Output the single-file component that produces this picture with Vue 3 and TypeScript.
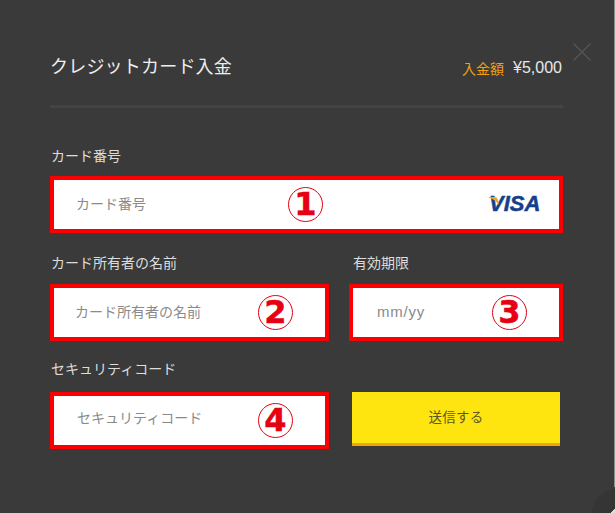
<script setup lang="ts">
const amount = '¥5,000'
</script>

<template>
  <div class="page">
    <button class="close" type="button" aria-label="閉じる">
      <svg width="18" height="18" viewBox="0 0 18 18"><path d="M0.5 0.5 L17.5 17.5 M17.5 0.5 L0.5 17.5" stroke="#565656" stroke-width="1.3" fill="none" /></svg>
    </button>
    <header class="head">
      <h1 class="title">クレジットカード入金</h1>
      <p class="sum"><span class="sum-label">入金額</span><span class="sum-value">{{ amount }}</span></p>
    </header>
    <form class="form" @submit.prevent>
      <div class="field wide">
        <label class="label">カード番号</label>
        <div class="box">
          <input class="input" placeholder="カード番号" />
          <span class="mark m1">1</span>
          <span class="visa">
            <span class="visa-text">VISA</span>
            <svg class="swoosh" width="12" height="9" viewBox="0 0 12 9"><path d="M0 0 H6.500 C8.500 0 9.500 1 10 3 L11 8 C8.500 4.500 5 1.500 0 0 Z" fill="#f0a81e" /></svg>
          </span>
        </div>
      </div>
      <div class="field">
        <label class="label mid">カード所有者の名前</label>
        <div class="box">
          <input class="input tight" placeholder="カード所有者の名前" />
          <span class="mark m2">2</span>
        </div>
      </div>
      <div class="field">
        <label class="label mid inset">有効期限</label>
        <div class="box">
          <input class="input latin" placeholder="mm/yy" />
          <span class="mark m3">3</span>
        </div>
      </div>
      <div class="field">
        <label class="label low">セキュリティコード</label>
        <div class="box">
          <input class="input raised" placeholder="セキュリティコード" />
          <span class="mark m2">4</span>
        </div>
      </div>
      <div class="field submit">
        <button class="send" type="submit">送信する</button>
      </div>
    </form>
    <span class="edge"></span>
    <span class="corner"></span>
    <span class="tip"></span>
  </div>
</template>

<style>
html, body { margin: 0; background: #3a3a3a; }
</style>

<style scoped>
.page {
  position: relative;
  box-sizing: border-box;
  width: 615px;
  height: 513px;
  padding: 0 52px 0 50px;
  overflow: hidden;
  background: #3a3a3a;
  font-family: "Noto Sans CJK JP", "Liberation Sans", sans-serif;
}
.close {
  position: absolute;
  left: 573px;
  top: 43px;
  padding: 0;
  border: 0;
  background: none;
  line-height: 0;
}
.head {
  display: flex;
  justify-content: space-between;
  align-items: flex-start;
  height: 105px;
  border-bottom: 3px solid #444;
}
.title {
  margin: 51px 0 0;
  font-size: 18px;
  font-weight: 400;
  letter-spacing: 0.2px;
  line-height: 28px;
  color: #eee;
}
.sum {
  display: flex;
  gap: 9px;
  align-items: center;
  margin: 58px 1px 0 0;
  height: 20px;
}
.sum-label { font-size: 14px; color: #f0a010; }
.sum-value { font-family: "Liberation Sans", sans-serif; font-size: 16px; color: #e8e8e8; }
.form {
  display: grid;
  grid-template-columns: 279px 214px;
  column-gap: 20px;
  margin-top: 35px;
}
.field {
  display: flex;
  flex-direction: column;
  height: 108px;
}
.wide { grid-column: 1 / -1; }
.label {
  height: 33px;
  margin-left: 1px;
  font-size: 14px;
  line-height: 24px;
  color: #ddd;
}
.mid { line-height: 22px; }
.low { line-height: 19px; }
.inset { margin-left: 4px; }
.box {
  position: relative;
  height: 57px;
}
.input {
  box-sizing: border-box;
  display: block;
  width: 100%;
  height: 57px;
  padding: 0 0 4px 22px;
  border: 4px solid #fb0000;
  border-radius: 0;
  outline: 0;
  background: #fff;
  font-family: "Noto Sans CJK JP", "Liberation Sans", sans-serif;
  font-size: 14px;
}
.tight { padding-left: 21px; }
.raised { padding: 0 0 8px 23px; }
.latin {
  padding-left: 24px;
  padding-bottom: 2px;
  font-family: "Liberation Sans", sans-serif;
  font-size: 15px;
  letter-spacing: 0.8px;
}
.input::placeholder { color: #8a8a8a; opacity: 1; }
.mark {
  position: absolute;
  top: 11px;
  box-sizing: border-box;
  width: 35px;
  height: 35px;
  border: 1.500px solid #e60012;
  border-radius: 50%;
  font-family: "DejaVu Sans", sans-serif;
  font-size: 32px;
  font-weight: 700;
  line-height: 32px;
  text-align: center;
  color: #e60012;
  -webkit-text-stroke: 0.5px #e60012;
}
.m1 { left: 238px; }
.m2 { left: 208px; }
.m3 { left: 143px; }
.visa {
  position: absolute;
  left: 438px;
  top: 18px;
  width: 54px;
  height: 20px;
}
.swoosh { position: absolute; left: 0; top: 3px; }
.visa-text {
  position: absolute;
  left: 1px;
  top: -3px;
  font-family: "Liberation Sans", sans-serif;
  font-size: 22px;
  font-style: italic;
  font-weight: 700;
  line-height: 26px;
  color: #153f8c;
  -webkit-text-stroke: 0.5px #153f8c;
}
.submit { padding: 33px 3px 0; box-sizing: border-box; }
.send {
  width: 100%;
  height: 54px;
  padding: 0 0 4px;
  border: 0;
  border-bottom: 3px solid #f5a300;
  border-radius: 0;
  background: #ffe50f;
  font-family: "Noto Sans CJK JP", "Liberation Sans", sans-serif;
  font-size: 13.500px;
  letter-spacing: 0.3px;
  color: #5a5820;
}
.edge {
  position: absolute;
  right: 0;
  top: 0;
  width: 1px;
  height: 487px;
  background: #8c8c8c;
}
.corner {
  position: absolute;
  left: 592px;
  top: 489px;
  width: 50px;
  height: 50px;
  border-radius: 50%;
  background: #353535;
}
.tip {
  position: absolute;
  right: 0;
  bottom: 0;
  width: 4px;
  height: 4px;
  background: linear-gradient(135deg, transparent 50%, #ddd 50%);
}
</style>
